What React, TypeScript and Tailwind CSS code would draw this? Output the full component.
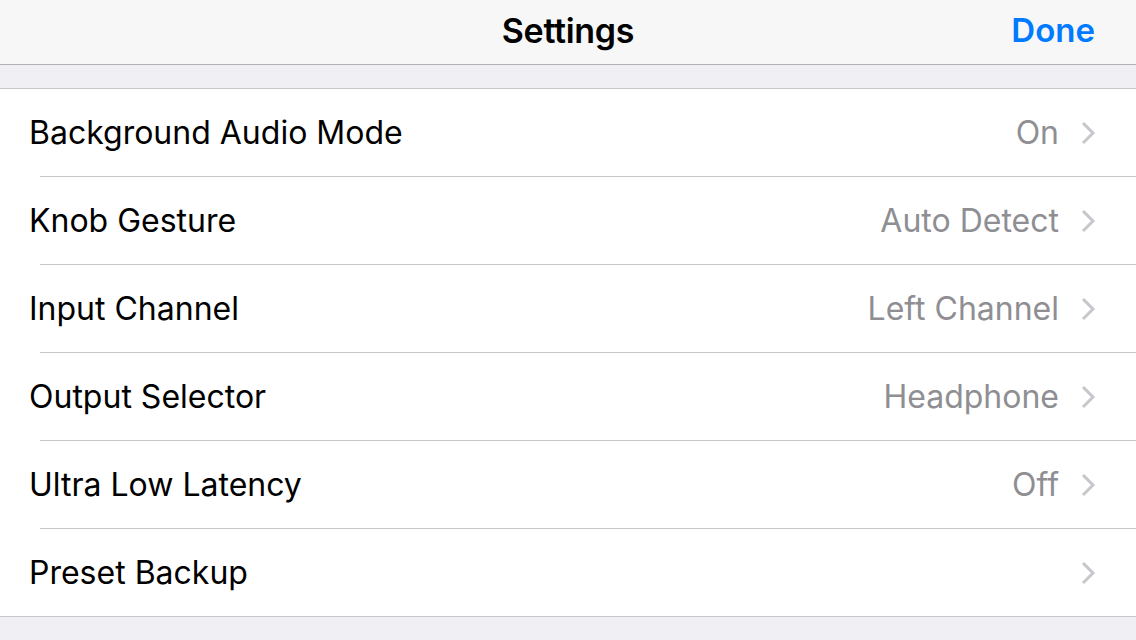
const rows = [
  { label: "Background Audio Mode", value: "On" },
  { label: "Knob Gesture", value: "Auto Detect" },
  { label: "Input Channel", value: "Left Channel" },
  { label: "Output Selector", value: "Headphone" },
  { label: "Ultra Low Latency", value: "Off" },
  { label: "Preset Backup", value: "" },
];

function Chevron() {
  return (
    <svg width="16" height="26" viewBox="0 0 16 26" className="shrink-0">
      <path d="M3 3 L13 13 L3 23" fill="none" stroke="#c7c7cc" strokeWidth="3" />
    </svg>
  );
}

export default function App() {
  return (
    <div
      className="w-[1136px] h-[640px] bg-[#efeff4] overflow-hidden text-black"
      style={{ fontFamily: "Inter, 'Noto Sans', sans-serif" }}
    >
      {/* Nav bar */}
      <div className="relative h-[65px] bg-[#f7f7f8] border-b border-[#b2b2b2] flex items-center justify-center pb-[3px]">
        <div className="text-[34px] font-semibold tracking-[-0.3px]">Settings</div>
        <div className="absolute right-[41px] top-0 h-full flex items-center pb-[3px] text-[33px] font-semibold text-[#007aff]">
          Done
        </div>
      </div>

      <div className="h-[23px]" />

      {/* Table */}
      <div className="bg-white border-y border-[#c8c7cc]">
        {rows.map((r, i) => (
          <div key={r.label}>
            <div className="h-[87px] flex items-center pl-[29px] pr-[40px]">
              <div className="flex-1 text-[32px]">{r.label}</div>
              {r.value && <div className="text-[32px] text-[#8e8e93] mr-[21px]">{r.value}</div>}
              <Chevron />
            </div>
            {i < rows.length - 1 && <div className="ml-[40px] h-px bg-[#c8c7cc]" />}
          </div>
        ))}
      </div>
    </div>
  );
}
